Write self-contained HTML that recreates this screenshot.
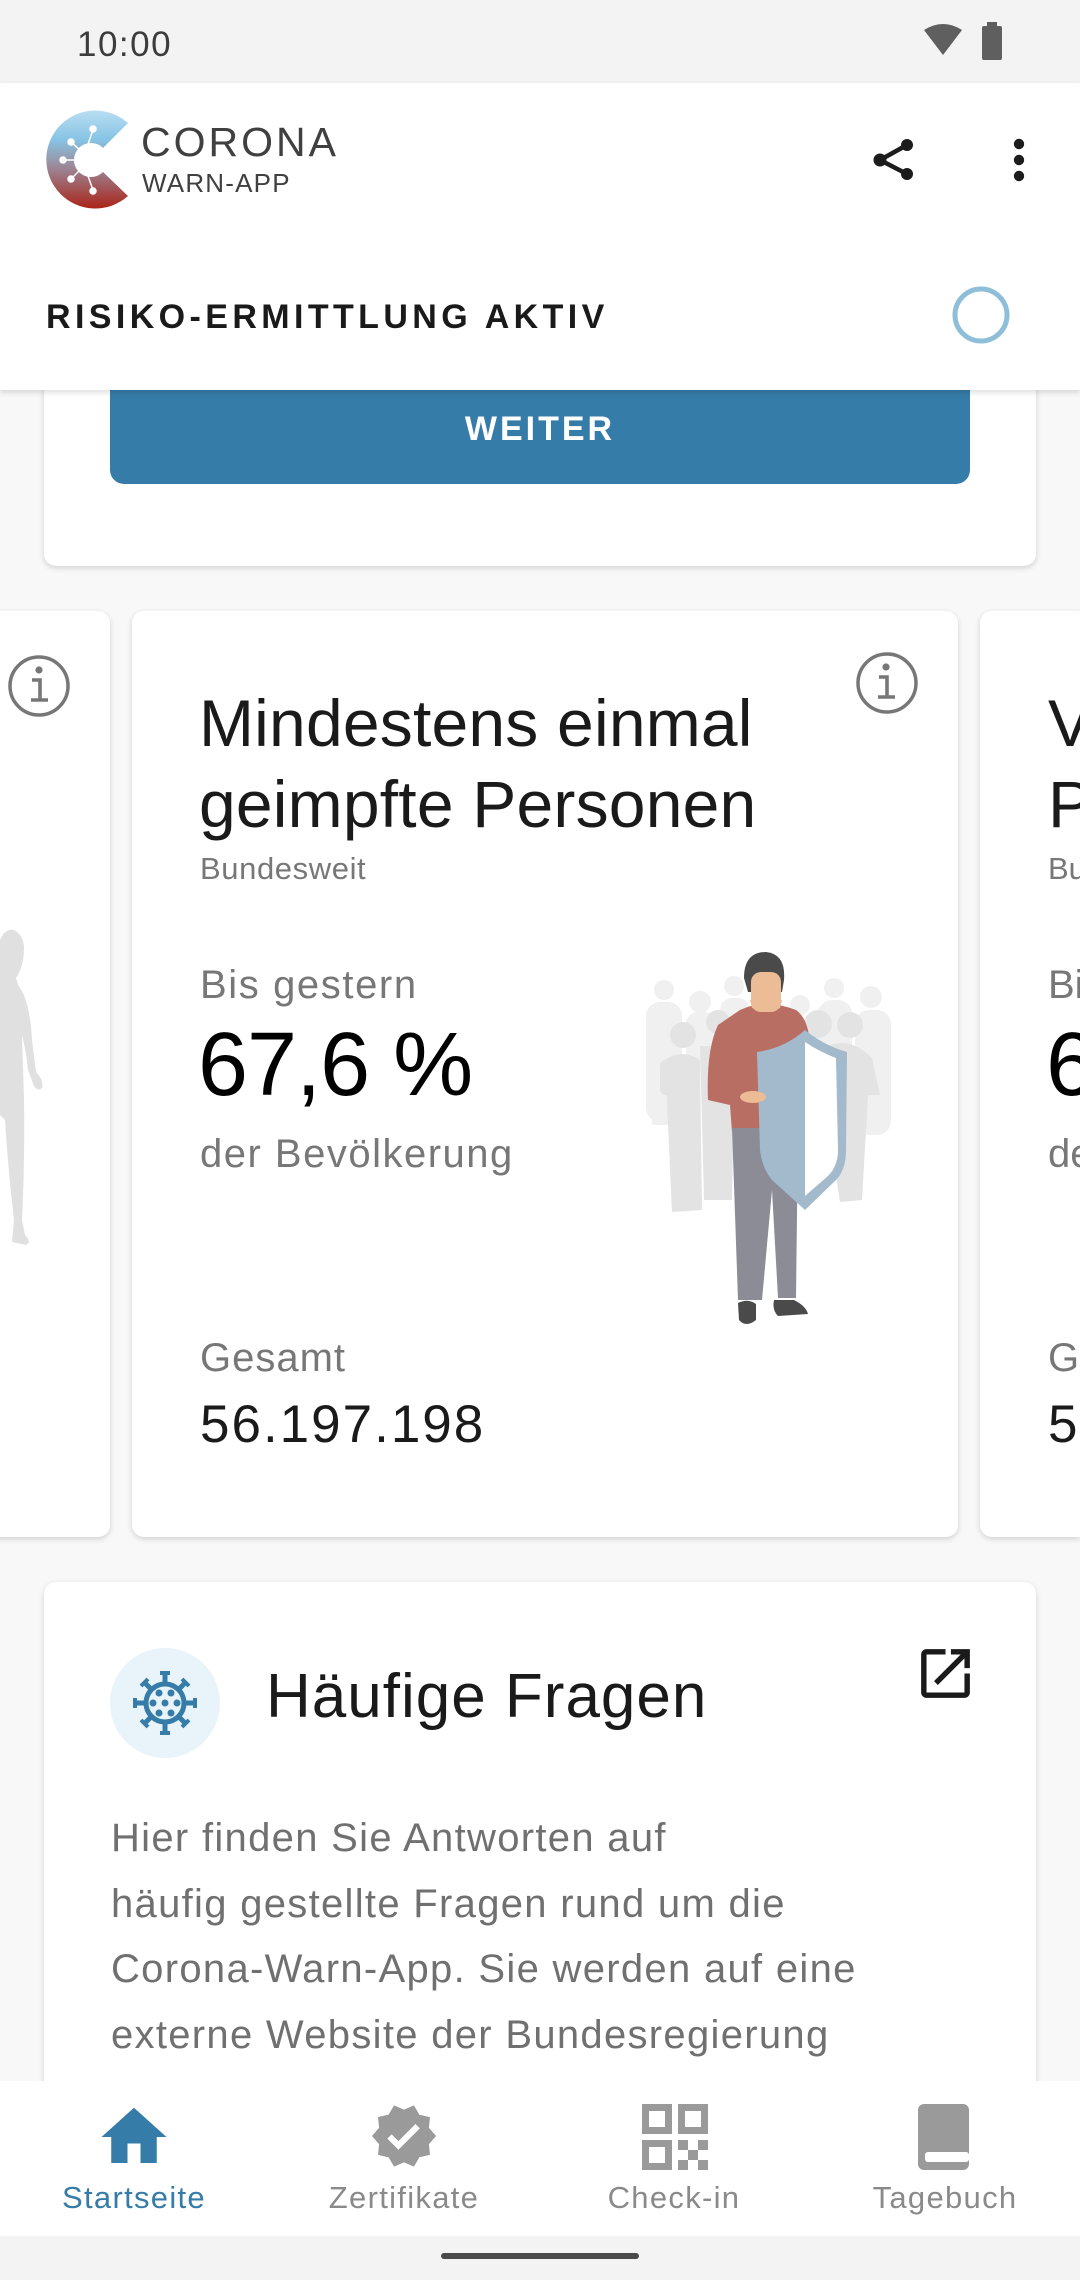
<!DOCTYPE html>
<html><head><meta charset="utf-8">
<style>
*{margin:0;padding:0;box-sizing:border-box}
html,body{width:1080px;height:2280px;overflow:hidden}
body{background:#f8f8f8;font-family:"Liberation Sans",sans-serif;position:relative}
.a{position:absolute;white-space:nowrap;line-height:1}
.card{position:absolute;background:#fff;border-radius:12px;box-shadow:0 2px 6px rgba(0,0,0,0.16)}
</style></head><body>

<div class="a" style="left:0;top:0;width:1080px;height:83px;background:#f3f3f3"></div>
<div class="a" style="left:77px;top:27px;font-size:35px;color:#3c3c3c;letter-spacing:1.5px">10:00</div>
<svg class="a" style="left:920px;top:20px" width="90" height="45" viewBox="0 0 90 45">
<path d="M4 10 Q23 -2 42 10 L23 35 Z" fill="#5f5f5f"/>
<rect x="62" y="6" width="20" height="34" rx="2" fill="#5f5f5f"/><rect x="67" y="2" width="10" height="6" fill="#5f5f5f"/>
</svg>

<div class="card" style="left:44px;top:300px;width:992px;height:266px"></div>
<div class="a" style="left:110px;top:330px;width:860px;height:154px;background:#367ca8;border-radius:14px"></div>
<div class="a" style="left:110px;top:412px;width:860px;text-align:center;font-size:34px;font-weight:bold;color:#fff;letter-spacing:3px">WEITER</div>

<div class="a" style="left:0;top:83px;width:1080px;height:307px;background:#fff;box-shadow:0 3px 5px rgba(0,0,0,0.12)"></div>
<svg class="a" style="left:40px;top:106px" width="100" height="110" viewBox="40 106 100 110">
<defs><linearGradient id="g" x1="0" y1="0" x2="0" y2="1"><stop offset="0" stop-color="#b9def3"/><stop offset="0.3" stop-color="#86c3e4"/><stop offset="0.55" stop-color="#9a8ea0"/><stop offset="1" stop-color="#aa2418"/></linearGradient></defs>
<path d="M128 123 A49 49 0 1 0 128 196 L103 172 A17 17 0 1 1 103 148 Z" fill="url(#g)"/>
<g stroke="#fff" stroke-width="1.5" fill="#fff">
<line x1="88" y1="144" x2="93" y2="130"/><circle cx="93" cy="129" r="3"/>
<line x1="80" y1="150" x2="72" y2="143"/><circle cx="71" cy="142" r="3"/>
<line x1="75" y1="160" x2="64" y2="160"/><circle cx="63" cy="160" r="3"/>
<line x1="80" y1="170" x2="72" y2="178"/><circle cx="71" cy="179" r="3"/>
<line x1="88" y1="176" x2="93" y2="190"/><circle cx="93" cy="191" r="3"/>
</g>
</svg>
<div class="a" style="left:141px;top:122px;font-size:41px;color:#404040;letter-spacing:3px">CORONA</div>
<div class="a" style="left:142px;top:170px;font-size:26px;color:#404040;letter-spacing:1.2px">WARN-APP</div>
<svg class="a" style="left:860px;top:130px" width="60" height="60" viewBox="860 130 60 60">
<g stroke="#1c1c1c" stroke-width="4.5"><line x1="880" y1="160" x2="907" y2="145"/><line x1="880" y1="160" x2="907" y2="174"/></g>
<g fill="#1c1c1c"><circle cx="880" cy="160" r="6.5"/><circle cx="907" cy="145" r="6"/><circle cx="907" cy="174" r="6"/></g>
</svg>
<svg class="a" style="left:1005px;top:132px" width="30" height="56" viewBox="1005 132 30 56"><g fill="#1c1c1c"><circle cx="1019" cy="144" r="5.2"/><circle cx="1019" cy="160" r="5.2"/><circle cx="1019" cy="176" r="5.2"/></g></svg>
<div class="a" style="left:46px;top:300px;font-size:34px;font-weight:bold;color:#1a1a1a;letter-spacing:4.4px">RISIKO-ERMITTLUNG AKTIV</div>
<svg class="a" style="left:945px;top:280px" width="72" height="72"><circle cx="36" cy="35" r="26" fill="none" stroke="#8fbfd8" stroke-width="5"/></svg>

<div class="card" style="left:-40px;top:611px;width:150px;height:926px"></div>
<svg class="a" style="left:0;top:900px" width="60" height="360" viewBox="0 0 60 360">
<path d="M0 40 Q5 28 14 30 Q24 36 24 48 Q24 66 16 78 L18 85 Q30 100 32 140 L36 172 Q44 180 42 188 Q38 192 34 186 L28 170 Q26 150 22 135 L24 200 Q25 260 22 320 L25 335 Q32 342 26 345 L12 342 L14 320 Q8 270 5 220 L0 215 Z" fill="#e0e0e0"/>
</svg>
<svg class="a" style="left:7px;top:654px" width="64" height="64" viewBox="7 654 64 64">
<circle cx="39" cy="686" r="29" fill="none" stroke="#777" stroke-width="3.5"/>
<circle cx="39" cy="670" r="3.6" fill="#777"/>
<path d="M32 680 H40 V700 M31 700 H48" stroke="#777" stroke-width="3.6" fill="none"/>
</svg>

<div class="card" style="left:132px;top:611px;width:826px;height:926px"></div>
<svg class="a" style="left:855px;top:651px" width="64" height="64" viewBox="855 651 64 64">
<circle cx="887" cy="683" r="29" fill="none" stroke="#777" stroke-width="3.5"/>
<circle cx="886" cy="667" r="3.6" fill="#777"/>
<path d="M879 677 H887 V697 M878 697 H895" stroke="#777" stroke-width="3.6" fill="none"/>
</svg>
<div class="a" style="left:199px;top:690px;font-size:66px;color:#1a1a1a;letter-spacing:0.2px">Mindestens einmal</div>
<div class="a" style="left:199px;top:771px;font-size:66px;color:#1a1a1a;letter-spacing:0.2px">geimpfte Personen</div>
<div class="a" style="left:200px;top:853px;font-size:31px;color:#777;letter-spacing:0.6px">Bundesweit</div>
<div class="a" style="left:200px;top:965px;font-size:40px;color:#777;letter-spacing:1.6px">Bis gestern</div>
<div class="a" style="left:198px;top:1020px;font-size:90px;color:#000;letter-spacing:-1px">67,6 %</div>
<div class="a" style="left:200px;top:1134px;font-size:40px;color:#777;letter-spacing:1.5px">der Bevölkerung</div>
<div class="a" style="left:200px;top:1338px;font-size:40px;color:#777;letter-spacing:1px">Gesamt</div>
<div class="a" style="left:200px;top:1398px;font-size:53px;color:#1a1a1a;letter-spacing:2px">56.197.198</div>

<svg class="a" style="left:600px;top:900px" width="320" height="450" viewBox="0 0 320 450">
<g fill="#f0f0f0">
<circle cx="64" cy="90" r="10"/><rect x="46" y="102" width="36" height="120" rx="14"/><rect x="52" y="200" width="20" height="25"/>
<circle cx="100" cy="102" r="11"/><rect x="86" y="112" width="30" height="60" rx="12"/>
<circle cx="134" cy="86" r="10"/><rect x="120" y="98" width="30" height="50" rx="12"/>
<circle cx="234" cy="88" r="10"/><rect x="218" y="100" width="34" height="130" rx="14"/>
<circle cx="271" cy="97" r="11"/><rect x="255" y="110" width="36" height="125" rx="14"/>
<circle cx="200" cy="105" r="10"/>
</g>
<g fill="#e3e3e3">
<circle cx="83" cy="135" r="13"/><path d="M65 160 Q82 148 100 160 L102 310 L72 312 Z"/><rect x="60" y="160" width="14" height="35" rx="6"/>
<circle cx="118" cy="122" r="12"/><path d="M100 146 L135 146 L132 300 L104 300 Z"/>
<circle cx="218" cy="124" r="14"/><circle cx="250" cy="125" r="13"/>
<path d="M230 145 Q252 138 272 158 L280 195 L268 195 L262 300 L240 302 L232 250 Z"/>
</g>
<path d="M140 110 Q165 98 196 110 Q210 120 210 150 L205 230 L132 232 L130 205 L108 200 Q106 150 118 125 Z" fill="#b86e63"/>
<path d="M144 78 Q144 52 166 52 Q186 54 184 80 L182 92 L148 92 Z" fill="#4a4a4a"/>
<rect x="151" y="72" width="30" height="40" rx="10" fill="#ecbc96"/>
<path d="M152 108 Q166 114 180 108 L182 100 L150 100 Z" fill="#ecbc96"/>
<path d="M132 228 L198 228 L196 398 L178 398 L172 290 L162 400 L138 400 Z" fill="#8c8c96"/>
<path d="M138 403 Q148 398 156 404 L156 420 Q146 428 139 420 Z" fill="#4a4a4a"/>
<path d="M174 400 L194 400 Q206 406 208 414 L178 416 Q172 410 174 400 Z" fill="#4a4a4a"/>
<path d="M157 152 Q185 148 205 130 Q225 146 247 152 L246 250 Q246 270 236 280 L205 310 L172 280 Q162 268 160 250 Z" fill="#a3bacd"/>
<path d="M205 142 Q220 152 236 158 L238 250 Q238 266 228 276 L205 296 Z" fill="#fff"/>
<ellipse cx="153" cy="197" rx="13" ry="6" fill="#ecbc96"/>
</svg>

<div class="card" style="left:980px;top:611px;width:100px;height:926px;border-radius:12px 0 0 12px;overflow:hidden">
<div class="a" style="left:68px;top:79px;font-size:66px;color:#1a1a1a">Vollständig</div>
<div class="a" style="left:68px;top:160px;font-size:66px;color:#1a1a1a">Personen</div>
<div class="a" style="left:68px;top:242px;font-size:31px;color:#777">Bundesweit</div>
<div class="a" style="left:68px;top:354px;font-size:40px;color:#777">Bis gestern</div>
<div class="a" style="left:66px;top:409px;font-size:90px;color:#000">6</div>
<div class="a" style="left:68px;top:523px;font-size:40px;color:#777">der</div>
<div class="a" style="left:68px;top:727px;font-size:40px;color:#777">Gesamt</div>
<div class="a" style="left:68px;top:787px;font-size:53px;color:#1a1a1a">5</div>
</div>

<div class="card" style="left:44px;top:1582px;width:992px;height:654px;border-radius:12px 12px 0 0"></div>
<svg class="a" style="left:109px;top:1648px" width="112" height="112" viewBox="109 1648 112 112">
<circle cx="165" cy="1703" r="55" fill="#e8f3fa"/>
<g transform="translate(165 1703)" fill="#367ca8" stroke="#367ca8">
<circle r="19" fill="none" stroke-width="5"/>
<g stroke-width="5">
<line x1="0" y1="-19" x2="0" y2="-29"/><line x1="0" y1="19" x2="0" y2="29"/><line x1="-19" y1="0" x2="-29" y2="0"/><line x1="19" y1="0" x2="29" y2="0"/>
<line x1="13" y1="-13" x2="20" y2="-20"/><line x1="-13" y1="-13" x2="-20" y2="-20"/><line x1="13" y1="13" x2="20" y2="20"/><line x1="-13" y1="13" x2="-20" y2="20"/>
</g>
<g stroke-width="4">
<line x1="-5" y1="-30" x2="5" y2="-30"/><line x1="-5" y1="30" x2="5" y2="30"/><line x1="-30" y1="-5" x2="-30" y2="5"/><line x1="30" y1="-5" x2="30" y2="5"/>
<line x1="17" y1="-24" x2="24" y2="-17"/><line x1="-17" y1="-24" x2="-24" y2="-17"/><line x1="17" y1="24" x2="24" y2="17"/><line x1="-17" y1="24" x2="-24" y2="17"/>
</g>
<g stroke="none"><circle cx="-6" cy="-10" r="3.5"/><circle cx="6" cy="-10" r="3.5"/><circle cx="-12" cy="0" r="3.5"/><circle cx="0" cy="0" r="3.5"/><circle cx="12" cy="0" r="3.5"/><circle cx="-6" cy="10" r="3.5"/><circle cx="6" cy="10" r="3.5"/></g>
</g>
</svg>
<div class="a" style="left:266px;top:1666px;font-size:62px;color:#1a1a1a;letter-spacing:1px">Häufige Fragen</div>
<svg class="a" style="left:913px;top:1641px" width="65" height="65" viewBox="0 0 24 24"><path d="M19 19H5V5h7V3H5a2 2 0 00-2 2v14a2 2 0 002 2h14c1.1 0 2-.9 2-2v-7h-2v7zM14 3v2h3.59l-9.830 9.83 1.41 1.41L19 6.41V10h2V3h-7z" fill="#1a1a1a"/></svg>
<div class="a" style="left:111px;top:1806px;font-size:40px;color:#707070;line-height:65.5px;white-space:normal;width:910px;letter-spacing:1.3px">Hier finden Sie Antworten auf<br>häufig gestellte Fragen rund um die<br>Corona-Warn-App. Sie werden auf eine<br>externe Website der Bundesregierung<br>weitergeleitet.</div>

<div class="a" style="left:0;top:2081px;width:1080px;height:155px;background:#fff"></div>
<svg class="a" style="left:95px;top:2098px" width="78" height="78" viewBox="0 0 24 24"><path d="M10 20v-6h4v6h5v-8h3L12 3 2 12h3v8z" fill="#367ca8"/></svg>
<svg class="a" style="left:369px;top:2101px" width="70" height="70" viewBox="0 0 24 24"><path d="M23 12l-2.44-2.79.34-3.69-3.61-.82-1.89-3.2L12 2.96 8.6 1.5 6.71 4.69 3.1 5.5l.34 3.7L1 12l2.44 2.79-.34 3.7 3.61.82L8.6 22.5l3.4-1.47 3.4 1.46 1.89-3.19 3.61-.82-.34-3.69L23 12zm-12.91 4.72l-3.8-3.81 1.48-1.48 2.32 2.33 5.85-5.87 1.48 1.48-7.33 7.35z" fill="#9a9a9a"/></svg>
<svg class="a" style="left:640px;top:2102px" width="70" height="70" viewBox="640 2102 70 70">
<g fill="none" stroke="#9a9a9a" stroke-width="7"><rect x="645.5" y="2107.5" width="23" height="23"/><rect x="681.5" y="2107.5" width="23" height="23"/><rect x="645.5" y="2143.5" width="23" height="23"/></g>
<g fill="#9a9a9a"><rect x="678" y="2140" width="10" height="10"/><rect x="698" y="2140" width="10" height="10"/><rect x="688" y="2150" width="10" height="10"/><rect x="678" y="2160" width="10" height="10"/><rect x="698" y="2160" width="10" height="10"/></g>
</svg>
<svg class="a" style="left:915px;top:2102px" width="60" height="70" viewBox="915 2102 60 70">
<rect x="918" y="2104" width="51" height="66" rx="6" fill="#9a9a9a"/>
<rect x="925" y="2152" width="44" height="10" rx="3" fill="#fff"/>
</svg>
<div class="a" style="left:0;top:2182px;width:268px;text-align:center;font-size:31px;color:#367ca8;letter-spacing:1.3px">Startseite</div>
<div class="a" style="left:270px;top:2182px;width:268px;text-align:center;font-size:31px;color:#8a8a8a;letter-spacing:1.3px">Zertifikate</div>
<div class="a" style="left:540px;top:2182px;width:268px;text-align:center;font-size:31px;color:#8a8a8a;letter-spacing:1.3px">Check-in</div>
<div class="a" style="left:810px;top:2182px;width:270px;text-align:center;font-size:31px;color:#8a8a8a;letter-spacing:1.3px">Tagebuch</div>
<div class="a" style="left:0;top:2236px;width:1080px;height:44px;background:#f3f3f3"></div>
<div class="a" style="left:441px;top:2253px;width:198px;height:6px;border-radius:3px;background:#4a4a4a"></div>
</body></html>
